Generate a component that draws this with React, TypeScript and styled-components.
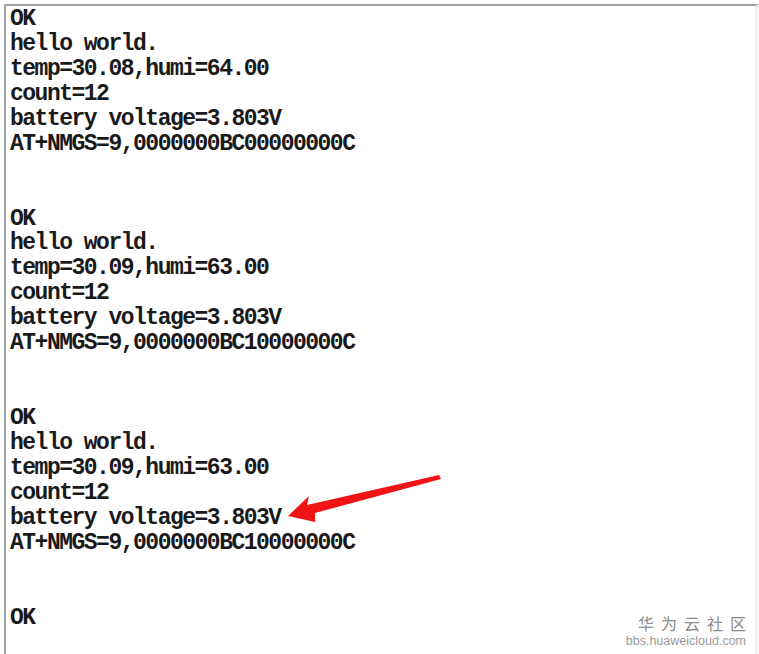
import React from "react";
import styled, { createGlobalStyle } from "styled-components";

const Global = createGlobalStyle`
  html, body { margin: 0; padding: 0; background: #ffffff; }
  body { width: 759px; height: 654px; overflow: hidden; }
`;

const Page = styled.div`
  position: relative;
  width: 759px;
  height: 654px;
  box-sizing: border-box;
  padding: 4px 0 0 4px;
  background: #ffffff;
`;

const Terminal = styled.div`
  height: 650px;
  box-sizing: border-box;
  border-top: 2px solid #a2a2a2;
  border-left: 2px solid #a2a2a2;
  border-right: 4px solid #f1f1f1;
  padding: 1px 0 0 4px;
  overflow: hidden;
`;

const Output = styled.div`
  display: flex;
  flex-direction: column;
  font-family: "Liberation Mono", "Courier New", monospace;
  font-size: 23px;
  font-weight: 700;
  letter-spacing: -1.5px;
  color: #1a1a1a;
`;

const Line = styled.div`
  height: 24.95px;
  line-height: 24.95px;
  white-space: pre;
`;

const Arrow = styled.svg`
  position: absolute;
  left: 280px;
  top: 468px;
  width: 170px;
  height: 60px;
  overflow: visible;
`;

const Watermark = styled.div`
  position: absolute;
  right: 13px;
  bottom: 6px;
  display: flex;
  flex-direction: column;
  align-items: flex-end;
  gap: 2px;
`;

const MarkTitle = styled.div`
  font-family: "Noto Sans CJK SC", sans-serif;
  font-size: 16px;
  letter-spacing: 7px;
  margin-right: -7px;
  color: #8a8a8a;
  line-height: 17px;
  height: 17px;
`;

const MarkUrl = styled.div`
  font-family: "Liberation Sans", Arial, sans-serif;
  font-size: 12.5px;
  color: #9a9a9a;
  line-height: 14px;
`;

const blocks = [
  ["OK", "hello world.", "temp=30.08,humi=64.00", "count=12", "battery voltage=3.803V", "AT+NMGS=9,0000000BC00000000C"],
  ["OK", "hello world.", "temp=30.09,humi=63.00", "count=12", "battery voltage=3.803V", "AT+NMGS=9,0000000BC10000000C"],
  ["OK", "hello world.", "temp=30.09,humi=63.00", "count=12", "battery voltage=3.803V", "AT+NMGS=9,0000000BC10000000C"],
  ["OK"],
];

export default function App() {
  const lines: string[] = [];
  blocks.forEach((b, i) => {
    lines.push(...b);
    if (i < blocks.length - 1) lines.push("", "");
  });
  return (
    <Page>
      <Global />
      <Terminal>
        <Output>
          {lines.map((l, i) => (
            <Line key={i}>{l}</Line>
          ))}
        </Output>
      </Terminal>
      <Arrow viewBox="280 468 170 60">
        <path
          d="M288 516 L309 496 L307 505 L439 475 L441 479 L315 513 L315 522 Z"
          fill="#f01414"
        />
      </Arrow>
      <Watermark>
        <MarkTitle>华为云社区</MarkTitle>
        <MarkUrl>bbs.huaweicloud.com</MarkUrl>
      </Watermark>
    </Page>
  );
}
